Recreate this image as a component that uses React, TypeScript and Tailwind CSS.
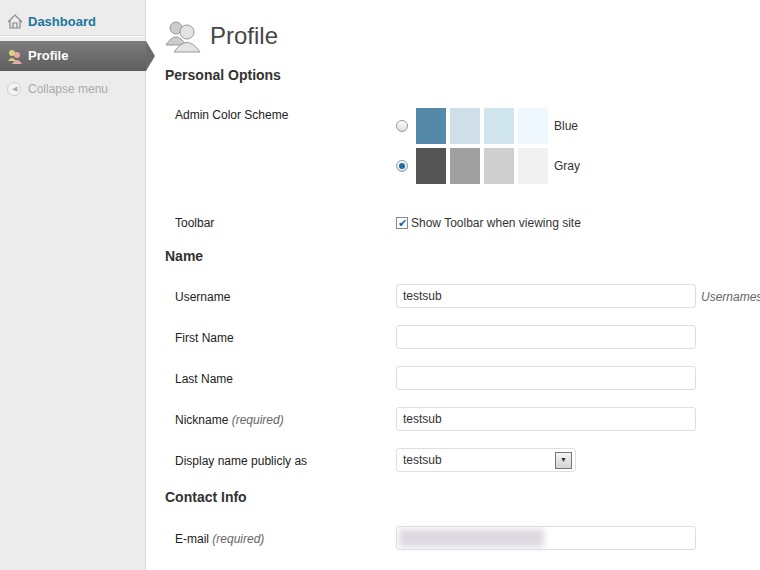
import React from "react";

const Input = ({ v = "", w = "w-[300px]" }: { v?: string; w?: string }) => (
  <div className={`h-[24px] ${w} border border-[#dfdfdf] rounded-[3px] bg-white flex items-center px-[6px] text-[12px] text-[#333]`}>{v}</div>
);

const Row = ({ label, h, children, req }: { label: string; h: string; children?: React.ReactNode; req?: boolean }) => (
  <div className={`flex ${h}`}>
    <div className="w-[231px] pl-[10px] text-[12px] text-[#222] pt-[4px]">
      {label}
      {req && <span className="italic text-[#666]"> (required)</span>}
    </div>
    <div className="flex-1 flex items-start">{children}</div>
  </div>
);

const Sw = ({ c }: { c: string }) => <div className="w-[30px] h-[36px]" style={{ background: c }} />;

export default function App() {
  return (
    <div className="flex w-[760px] h-[570px] overflow-hidden bg-white" style={{ fontFamily: '"Liberation Sans", Arial, sans-serif' }}>
      <div className="w-[146px] shrink-0 bg-[#ececec] border-r border-[#dcdcdc] relative">
        <div className="h-[8px]" />
        <div className="h-[28px] flex items-center pl-[7px] gap-[5px] text-[13px] font-bold text-[#21759b] border-b border-[#d8d8d8]">
          <svg width="16" height="15" viewBox="0 0 16 15"><path d="M1 8 L8 1 L15 8 M3 6 V14 H13 V6 M6 14 V9 H10 V14" fill="none" stroke="#888" strokeWidth="1.2" /></svg>
          Dashboard
        </div>
        <div className="h-[5px] border-t border-white" />
        <div className="h-[30px] flex items-center pl-[7px] gap-[5px] text-[13px] font-bold text-white bg-gradient-to-b from-[#7d7d7d] to-[#5e5e5e] relative w-[146px]">
          <svg width="16" height="16" viewBox="0 0 16 16"><circle cx="5" cy="5" r="3" fill="#d8d27a" /><path d="M1 13 Q5 7 9 13Z" fill="#d8d27a" /><circle cx="10" cy="7" r="3" fill="#e8a8a8" /><path d="M5 16 Q10 8 15 16Z" fill="#e8a8a8" /></svg>
          Profile
          <div className="absolute right-[-9px] top-0 w-0 h-0 border-t-[15px] border-b-[15px] border-l-[9px] border-t-transparent border-b-transparent border-l-[#6a6a6a]" />
        </div>
        <div className="h-[36px] flex items-center pl-[7px] gap-[7px] text-[12px] text-[#aaa]">
          <div className="w-[14px] h-[14px] rounded-full border border-[#ccc] bg-[#f4f4f4] flex items-center justify-center text-[7px] text-[#aaa]">◀</div>
          Collapse menu
        </div>
      </div>
      <div className="flex-1 pl-[19px]">
        <div className="h-[65px] flex items-center gap-[9px] pt-[6px]">
          <svg width="36" height="34" viewBox="0 0 36 34">
            <circle cx="11" cy="9" r="6" fill="#ccc" stroke="#999" />
            <path d="M1 26 Q11 10 21 26Z" fill="#ccc" stroke="#999" />
            <circle cx="22" cy="13" r="7" fill="#e4e4e4" stroke="#999" />
            <path d="M9 33 Q22 14 35 33Z" fill="#e4e4e4" stroke="#999" />
          </svg>
          <span className="text-[24px] text-[#464646]">Profile</span>
        </div>
        <div className="text-[14px] font-bold text-[#333] h-[37px]">Personal Options</div>
        <Row label="Admin Color Scheme" h="h-[108px]">
          <div className="flex flex-col gap-[4px] pt-[6px]">
            {[
              ["Blue", ["#5589aa", "#cfdfe9", "#d1e5ee", "#eff8ff"], false],
              ["Gray", ["#555", "#a0a0a0", "#cfcfcf", "#f1f1f1"], true],
            ].map(([n, cs, sel]: any) => (
              <div key={n} className="flex items-center">
                <div className="w-[12px] h-[12px] rounded-full border border-[#999] bg-gradient-to-b from-white to-[#ddd] flex items-center justify-center mr-[8px]">
                  {sel && <div className="w-[6px] h-[6px] rounded-full bg-[#1e6fa4]" />}
                </div>
                <div className="flex gap-[4px]">{cs.map((c: string) => <Sw key={c} c={c} />)}</div>
                <span className="ml-[6px] text-[12px] text-[#333]">{n}</span>
              </div>
            ))}
          </div>
        </Row>
        <Row label="Toolbar" h="h-[36px]">
          <div className="flex items-center gap-[3px] pt-[4px] text-[12px] text-[#333]">
            <div className="w-[12px] h-[12px] border border-[#888] bg-white flex items-center justify-center text-[#1e5fa4] text-[11px] leading-none">✔</div>
            Show Toolbar when viewing site
          </div>
        </Row>
        <div className="text-[14px] font-bold text-[#333] h-[38px]">Name</div>
        {[
          ["Username", "testsub"],
          ["First Name", ""],
          ["Last Name", ""],
          ["Nickname", "testsub"],
        ].map(([l, v]) => (
          <Row key={l} label={l} h="h-[41px]" req={l === "Nickname"}>
            <Input v={v} />
            {l === "Username" && <span className="ml-[5px] pt-[4px] text-[12px] italic text-[#666] whitespace-nowrap">Usernames cannot be changed.</span>}
          </Row>
        ))}
        <Row label="Display name publicly as" h="h-[39px]">
          <div className="h-[24px] w-[180px] border border-[#dfdfdf] rounded-[3px] bg-white flex items-center justify-between pl-[6px] pr-[3px] text-[12px] text-[#333]">
            testsub
            <div className="w-[17px] h-[17px] border border-[#777] bg-gradient-to-b from-[#f4f4f4] to-[#d4d4d4] flex items-center justify-center text-[7px]">▼</div>
          </div>
        </Row>
        <div className="text-[14px] font-bold text-[#333] h-[39px]">Contact Info</div>
        <Row label="E-mail" h="h-[41px]" req>
          <div className="h-[24px] w-[300px] border border-[#dfdfdf] rounded-[3px] bg-white flex items-center px-[2px]">
            <div className="h-[18px] w-[145px] bg-[#dcd8e0] blur-[3px]" />
          </div>
        </Row>
      </div>
    </div>
  );
}
